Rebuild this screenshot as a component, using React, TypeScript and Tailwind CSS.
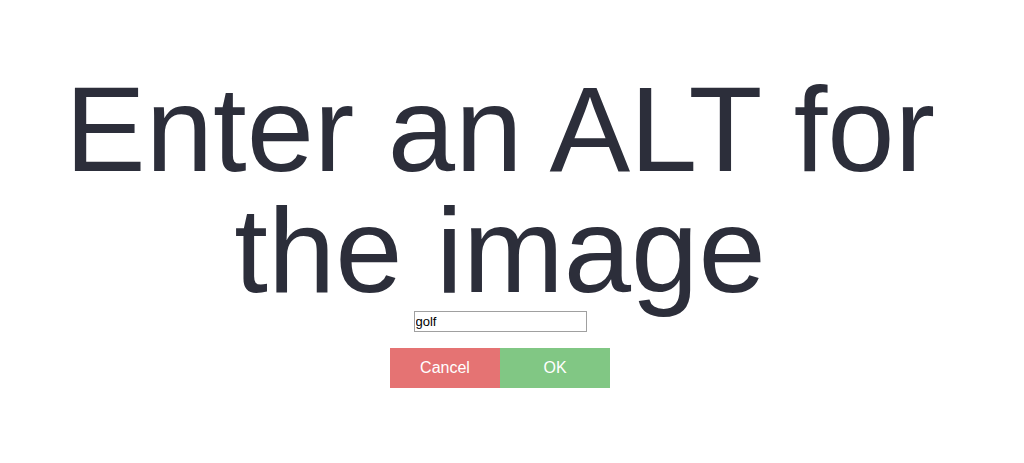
import { useState } from "react";

export default function App() {
  const [alt, setAlt] = useState("golf");

  return (
    <div className="flex h-[463px] w-[1000px] flex-col items-center bg-white pt-[69px] font-['Liberation_Sans',Arial,sans-serif]">
      <h1 className="text-center text-[121px] leading-[121px] font-normal text-[#2c2e3a]">
        Enter an ALT for the image
      </h1>

      <input
        type="text"
        value={alt}
        onChange={(e) => setAlt(e.target.value)}
        className="h-[21px] w-[173px] border border-[#a0a0a0] px-[1px] text-[13px] text-black outline-none"
      />

      <div className="mt-4 flex">
        <button
          type="button"
          className="h-10 w-[110px] bg-[#e57373] text-base text-white"
        >
          Cancel
        </button>
        <button
          type="button"
          className="h-10 w-[110px] bg-[#81c784] text-base text-white"
        >
          OK
        </button>
      </div>
    </div>
  );
}
